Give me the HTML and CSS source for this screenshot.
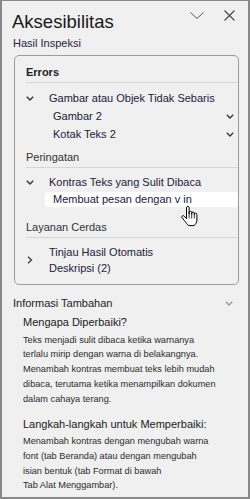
FILE: index.html
```html
<!DOCTYPE html>
<html lang="id">
<head>
    <meta charset="UTF-8">
    <meta name="viewport" content="width=device-width, initial-scale=1.0">
    <title>Aksesibilitas</title>
    <link rel="stylesheet" href="styles.css">
</head>
<body>

    <div class="pane">
        <div class="pane-head">
            <h1 class="pane-title">Aksesibilitas</h1>
            <div class="pane-actions">
                <svg width="14" height="7" viewBox="0 0 14 7"><polyline points="0.5,0.5 7,6.5 13.5,0.5" fill="none" stroke="#555" stroke-width="1"/></svg>
                <svg width="11" height="11" viewBox="0 0 11 11"><path d="M0.5 0.5 L10.5 10.5 M10.5 0.5 L0.5 10.5" stroke="#444" stroke-width="1.1"/></svg>
            </div>
        </div>

        <div class="section-label">Hasil Inspeksi</div>

        <div class="results">
            <div class="group">
                <div class="group-head group-head-bold">Errors</div>
                <div class="issue">
                    <div class="issue-row">
                        <svg class="caret" width="8" height="5" viewBox="0 0 8 5"><polyline points="0.8,0.8 4,4 7.2,0.8" fill="none" stroke="#333" stroke-width="1.4"/></svg>
                        <span>Gambar atau Objek Tidak Sebaris</span>
                    </div>
                    <div class="child">
                        <span>Gambar 2</span>
                        <svg width="8" height="5" viewBox="0 0 8 5"><polyline points="0.8,0.8 4,4 7.2,0.8" fill="none" stroke="#333" stroke-width="1.3"/></svg>
                    </div>
                    <div class="child">
                        <span>Kotak Teks 2</span>
                        <svg width="8" height="5" viewBox="0 0 8 5"><polyline points="0.8,0.8 4,4 7.2,0.8" fill="none" stroke="#333" stroke-width="1.3"/></svg>
                    </div>
                </div>
            </div>

            <div class="group">
                <div class="group-head">Peringatan</div>
                <div class="issue issue-tight">
                    <div class="issue-row">
                        <svg class="caret" width="8" height="5" viewBox="0 0 8 5"><polyline points="0.8,0.8 4,4 7.2,0.8" fill="none" stroke="#333" stroke-width="1.4"/></svg>
                        <span>Kontras Teks yang Sulit Dibaca</span>
                    </div>
                    <div class="child child-active">
                        <span>Membuat pesan dengan v in</span>
                    </div>
                </div>
            </div>

            <div class="group group-last">
                <div class="group-head">Layanan Cerdas</div>
                <div class="issue">
                    <div class="issue-row issue-row-multi">
                        <svg class="caret" width="8" height="8" viewBox="0 0 8 8"><polyline points="2,0.8 5.5,4 2,7.2" fill="none" stroke="#333" stroke-width="1.2"/></svg>
                        <span>Tinjau Hasil Otomatis<br>Deskripsi (2)</span>
                    </div>
                </div>
            </div>
        </div>

        <div class="more-head">
            <span>Informasi Tambahan</span>
            <svg width="8" height="5" viewBox="0 0 8 5"><polyline points="0.8,0.8 4,4 7.2,0.8" fill="none" stroke="#999" stroke-width="1.4"/></svg>
        </div>

        <div class="info">
            <h2>Mengapa Diperbaiki?</h2>
            <p>Teks menjadi sulit dibaca ketika warnanya<br>
               terlalu mirip dengan warna di belakangnya.<br>
               Menambah kontras membuat teks lebih mudah<br>
               dibaca, terutama ketika menampilkan dokumen<br>
               dalam cahaya terang.</p>
            <h2 class="steps-title">Langkah-langkah untuk Memperbaiki:</h2>
            <p class="steps">Menambah kontras dengan mengubah warna<br>
               font (tab Beranda) atau dengan mengubah<br>
               isian bentuk (tab Format di bawah<br>
               Tab Alat Menggambar).</p>
        </div>

        <!-- mouse pointer over the selected result -->
        <svg class="cursor" width="18" height="21" viewBox="0 0 18 21">
            <path d="M5.5 1.7 a1.3 1.3 0 0 1 2.6 0 V8 V6.6 a1.3 1.3 0 0 1 2.6 0 V8.4 V7.4 a1.3 1.3 0 0 1 2.6 0 V9 V8.4 a1.3 1.3 0 0 1 2.6 0 V14 c0 2.6 -1.6 4.6 -3 5.6 H7.6 C6.4 18.4 4.8 16.4 3.4 14.6 L1.1 11.6 a1.2 1.2 0 0 1 1.9 -1.5 L5.5 12.6 Z" fill="#fff" stroke="#000" stroke-width="1"/>
            <path d="M8.1 8 V12.5 M10.7 8.4 V12.5 M13.3 9 V12.5" stroke="#000" stroke-width="0.8"/>
        </svg>
    </div>

</body>
</html>
```

FILE: styles.css
```css
body {
    margin: 0;
    font-family: 'Liberation Sans', Arial, sans-serif;
    color: #222;
}
.pane {
    position: relative;
    box-sizing: border-box;
    width: 250px;
    height: 499px;
    overflow: hidden;
    background-color: #f0f0f0;
    border: 2px solid #888;
    border-top-width: 1px;
}
.pane-head {
    display: flex;
    align-items: flex-start;
    padding: 9px 0 0 10px;
}
.pane-title {
    margin: 0;
    font-size: 18.5px;
    font-weight: normal;
    line-height: 24px;
    color: #1a1a1a;
}
.pane-actions {
    display: flex;
    align-items: center;
    gap: 20px;
    height: 11px;
    margin: 0 13px 0 auto;
}
.pane-actions svg {
    display: block;
}
.section-label {
    margin-top: 1px;
    padding-left: 11px;
    font-size: 11px;
    line-height: 16px;
    color: #2a2140;
}
.results {
    margin: 4px 9px 0 12px;
    padding: 8px 0 8px;
    border: 1px solid #9c9c9c;
    border-radius: 5px;
}
.group {
    margin-top: 6px;
}
.group:first-child {
    margin-top: 0;
}
.group-last {
    margin-top: 12px;
}
.group-head {
    margin-left: 11px;
    padding-bottom: 2px;
    font-size: 11px;
    line-height: 16px;
    color: #333;
    border-bottom: 1px solid #d6d6d6;
}
.group-head-bold {
    font-weight: bold;
    color: #222;
}
.issue {
    margin-top: 6px;
    font-size: 11px;
    line-height: 18px;
    color: #22203a;
}
.issue-tight {
    margin-top: 5px;
}
.issue-row {
    display: flex;
    align-items: center;
    padding-left: 11px;
}
.issue-row-multi {
    line-height: 16px;
}
.caret {
    flex: none;
    margin-right: 15px;
}
.child {
    display: flex;
    align-items: center;
    justify-content: space-between;
    margin-left: 30px;
    padding: 0 4px 0 8px;
}
.child-active {
    margin-top: 1px;
    line-height: 15px;
    background-color: #fff;
    border-radius: 3px;
}
.more-head {
    display: flex;
    align-items: center;
    justify-content: space-between;
    margin-top: 10px;
    padding: 0 15px 0 11px;
    font-size: 11px;
    line-height: 16px;
    color: #222;
}
.info {
    padding-left: 21px;
}
.info h2 {
    margin: 3px 0 0;
    font-size: 11px;
    font-weight: normal;
    line-height: 16px;
    color: #1a1a1a;
}
.info p {
    margin: 2.5px 0 0;
    font-size: 9.2px;
    line-height: 14.8px;
    white-space: nowrap;
    color: #2b2b2b;
}
.info .steps-title {
    margin-top: 10px;
}
.info .steps {
    margin-top: 2px;
    line-height: 14.6px;
}
.cursor {
    position: absolute;
    left: 179px;
    top: 205px;
}
```
